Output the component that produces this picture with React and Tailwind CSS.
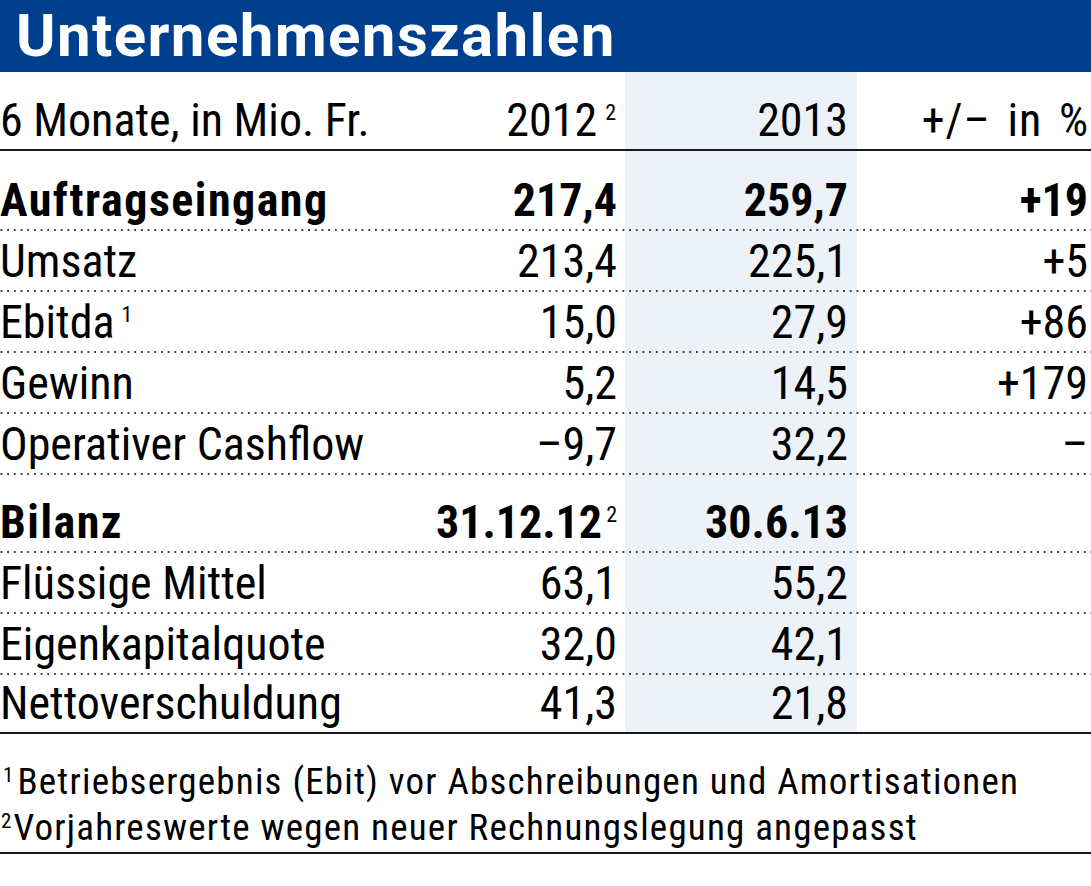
import React from "react";

const rows = [
  { label: "Auftragseingang", a: "217,4", b: "259,7", c: "+19", bold: true, h: "h-[80px]" },
  { label: "Umsatz", a: "213,4", b: "225,1", c: "+5" },
  { label: "Ebitda", sup: "1", a: "15,0", b: "27,9", c: "+86" },
  { label: "Gewinn", a: "5,2", b: "14,5", c: "+179" },
  { label: "Operativer Cashflow", a: "–9,7", b: "32,2", c: "–" },
  { label: "Bilanz", a: "31.12.12", asup: "2", b: "30.6.13", c: "", bold: true, h: "h-[78px]" },
  { label: "Flüssige Mittel", a: "63,1", b: "55,2", c: "" },
  { label: "Eigenkapitalquote", a: "32,0", b: "42,1", c: "" },
  { label: "Nettoverschuldung", a: "41,3", b: "21,8", c: "", last: true },
];

function Sup({ children, className = "" }) {
  return (
    <span className={`relative -top-[16px] text-[22px] leading-none font-normal tracking-normal ${className}`}>
      {children}
    </span>
  );
}

export default function App() {
  return (
    <div className="w-[1091px] h-[886px] bg-white text-black font-['Roboto_Condensed','Roboto',sans-serif] overflow-hidden">
      <div className="h-[72px] bg-[#003f8e] pl-[16px]">
        <h1 className="font-['Roboto',sans-serif] text-[60px] leading-[72px] font-bold tracking-[1.4px] text-white">
          Unternehmenszahlen
        </h1>
      </div>

      <div className="bg-[linear-gradient(to_right,transparent_625px,#edf2f8_625px,#edf2f8_857px,transparent_857px)]">
        <div className="grid grid-cols-[420px_205px_232px_1fr] items-end h-[79px] pb-[6px] border-b-2 border-[#1a1a1a] text-[46px] leading-[46px]">
          <div className="whitespace-nowrap">6 Monate, in Mio. Fr.</div>
          <div className="text-right pr-[9px] whitespace-nowrap">
            2012<Sup className="ml-[8px]">2</Sup>
          </div>
          <div className="text-right pr-[9px]">2013</div>
          <div className="text-right pr-[2px] whitespace-nowrap tracking-[1px] [word-spacing:5px]">+/– in %</div>
        </div>

        {rows.map((r) => (
          <div
            key={r.label}
            className={`grid grid-cols-[420px_205px_232px_1fr] items-end text-[46px] leading-[46px] ${
              r.last
                ? "h-[59px] pb-[6px] border-b-2 border-[#1a1a1a]"
                : `${r.h || "h-[61px]"} pb-[8px] bg-[linear-gradient(to_right,#444_2px,transparent_2px)] bg-[length:6.7px_2px] bg-repeat-x bg-bottom`
            } ${r.bold ? "font-bold" : ""}`}
          >
            <div className={`whitespace-nowrap ${r.bold ? "tracking-[1.5px]" : ""}`}>
              {r.label}
              {r.sup && <Sup className="ml-[7px]">{r.sup}</Sup>}
            </div>
            <div className="text-right pr-[8px] whitespace-nowrap">
              {r.a}
              {r.asup && <Sup className="ml-[4px]">{r.asup}</Sup>}
            </div>
            <div className="text-right pr-[9px] whitespace-nowrap">{r.b}</div>
            <div className="text-right pr-[3px] whitespace-nowrap">{r.c}</div>
          </div>
        ))}
      </div>

      <div className="pt-[25px] pb-[1px] border-b-2 border-[#1a1a1a] text-[37px] leading-[46px] tracking-[1.2px]">
        <div className="whitespace-nowrap">
          <span className="relative -top-[12px] text-[21px] leading-none tracking-normal ml-[3px] mr-[4px]">1</span>
          Betriebsergebnis (Ebit) vor Abschreibungen und Amortisationen
        </div>
        <div className="whitespace-nowrap">
          <span className="relative -top-[12px] text-[21px] leading-none tracking-normal ml-[1px] mr-[2px]">2</span>
          Vorjahreswerte wegen neuer Rechnungslegung angepasst
        </div>
      </div>
    </div>
  );
}
